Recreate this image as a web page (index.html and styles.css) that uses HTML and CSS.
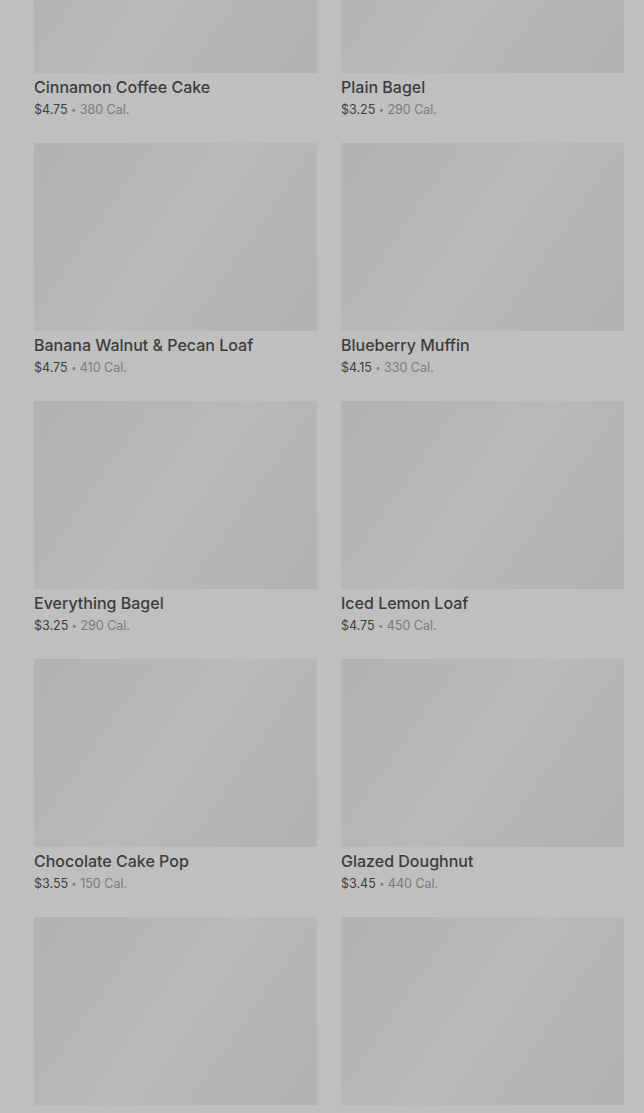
FILE: index.html
```html
<!DOCTYPE html>
<html lang="en">
  <head>
    <meta charset="UTF-8" />
    <meta name="viewport" content="width=device-width, initial-scale=1.0" />
    <title>Bakery</title>
    <link rel="stylesheet" href="styles.css">
  </head>
  <body>
    <div class="menu-grid">
      <div class="product">
        <div class="product-image"></div>
        <div class="product-name">Cinnamon Coffee Cake</div>
        <div class="product-meta"><span class="price">$4.75</span> <span class="dot">&bull;</span> 380 Cal.</div>
      </div>
      <div class="product">
        <div class="product-image"></div>
        <div class="product-name">Plain Bagel</div>
        <div class="product-meta"><span class="price">$3.25</span> <span class="dot">&bull;</span> 290 Cal.</div>
      </div>
      <div class="product">
        <div class="product-image"></div>
        <div class="product-name">Banana Walnut &amp; Pecan Loaf</div>
        <div class="product-meta"><span class="price">$4.75</span> <span class="dot">&bull;</span> 410 Cal.</div>
      </div>
      <div class="product">
        <div class="product-image"></div>
        <div class="product-name">Blueberry Muffin</div>
        <div class="product-meta"><span class="price">$4.15</span> <span class="dot">&bull;</span> 330 Cal.</div>
      </div>
      <div class="product">
        <div class="product-image"></div>
        <div class="product-name">Everything Bagel</div>
        <div class="product-meta"><span class="price">$3.25</span> <span class="dot">&bull;</span> 290 Cal.</div>
      </div>
      <div class="product">
        <div class="product-image"></div>
        <div class="product-name">Iced Lemon Loaf</div>
        <div class="product-meta"><span class="price">$4.75</span> <span class="dot">&bull;</span> 450 Cal.</div>
      </div>
      <div class="product">
        <div class="product-image"></div>
        <div class="product-name">Chocolate Cake Pop</div>
        <div class="product-meta"><span class="price">$3.55</span> <span class="dot">&bull;</span> 150 Cal.</div>
      </div>
      <div class="product">
        <div class="product-image"></div>
        <div class="product-name">Glazed Doughnut</div>
        <div class="product-meta"><span class="price">$3.45</span> <span class="dot">&bull;</span> 440 Cal.</div>
      </div>
      <div class="product">
        <div class="product-image"></div>
        <div class="product-name">Petite Vanilla Bean Scone</div>
        <div class="product-meta"><span class="price">$2.45</span> <span class="dot">&bull;</span> 120 Cal.</div>
      </div>
      <div class="product">
        <div class="product-image"></div>
        <div class="product-name">Cookies &amp; Cream Cake Pop</div>
        <div class="product-meta"><span class="price">$3.55</span> <span class="dot">&bull;</span> 170 Cal.</div>
      </div>
    </div>
  </body>
</html>
```

FILE: styles.css
```css
body {
  margin: 0;
  font-family: Inter, "Noto Sans", Arial, sans-serif;
  background-color: #bfbfbf;
  overflow: hidden;
}
.menu-grid {
  display: grid;
  grid-template-columns: 283px 283px;
  column-gap: 24px;
  row-gap: 24px;
  padding: 0 20px 0 34px;
  margin-top: -115px;
}
.product-image {
  height: 188px;
  background: linear-gradient(
    125deg,
    #b2b2b2 0%,
    #b6b6b6 35%,
    #b9b9b9 50%,
    #b5b5b5 70%,
    #b2b2b2 100%
  );
}
.product-name {
  margin-top: 4px;
  font-size: 16px;
  line-height: 20px;
  font-weight: 500;
  color: #3d3d3d;
}
.product-meta {
  margin-top: 4px;
  font-size: 12.5px;
  line-height: 18px;
  color: #7b7b7b;
}
.price {
  color: #3f3f3f;
}
.dot {
  font-size: 9px;
  vertical-align: 1px;
}
```
